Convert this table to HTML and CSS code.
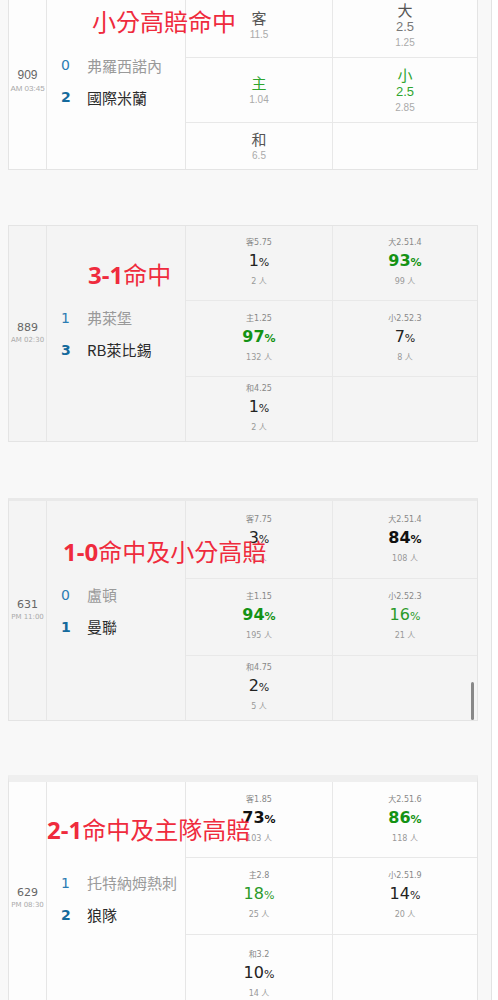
FILE: index.html
```html
<!DOCTYPE html>
<html>
<head>
    <title>賽果</title>
    <meta charset="UTF-8">
    <meta name="viewport" content="width=device-width, initial-scale=1.0">
    <link rel="stylesheet" href="styles.css">
</head>
<body>
    <div class="page">

        <div class="match m1">
            <div class="time">
                <div class="no">909</div>
                <div class="clock">AM 03:45</div>
            </div>
            <div class="teams">
                <div class="team away"><span class="score">0</span><span class="name">弗羅西諾內</span></div>
                <div class="team home"><span class="score">2</span><span class="name">國際米蘭</span></div>
            </div>
            <div class="cell pick"><div class="lbl">客</div><div class="odd">11.5</div></div>
            <div class="cell pick"><div class="lbl">大</div><div class="line">2.5</div><div class="odd">1.25</div></div>
            <div class="cell pick win"><div class="lbl">主</div><div class="odd">1.04</div></div>
            <div class="cell pick win"><div class="lbl">小</div><div class="line">2.5</div><div class="odd">2.85</div></div>
            <div class="cell pick last"><div class="lbl">和</div><div class="odd">6.5</div></div>
            <div class="cell last"></div>
            <div class="stamp">小分高賠命中</div>
        </div>

        <div class="match m2 grey">
            <div class="time">
                <div class="no">889</div>
                <div class="clock">AM 02:30</div>
            </div>
            <div class="teams">
                <div class="team away"><span class="score">1</span><span class="name">弗萊堡</span></div>
                <div class="team home"><span class="score">3</span><span class="name">RB萊比錫</span></div>
            </div>
            <div class="cell vote"><div class="tag">客5.75</div><div class="pct">1<small>%</small></div><div class="cnt">2 人</div></div>
            <div class="cell vote"><div class="tag">大2.51.4</div><div class="pct strong green">93<small>%</small></div><div class="cnt">99 人</div></div>
            <div class="cell vote"><div class="tag">主1.25</div><div class="pct strong green">97<small>%</small></div><div class="cnt">132 人</div></div>
            <div class="cell vote"><div class="tag">小2.52.3</div><div class="pct">7<small>%</small></div><div class="cnt">8 人</div></div>
            <div class="cell vote last"><div class="tag">和4.25</div><div class="pct">1<small>%</small></div><div class="cnt">2 人</div></div>
            <div class="cell last"></div>
            <div class="stamp"><b>3-1</b>命中</div>
        </div>

        <div class="match m3 grey">
            <div class="time">
                <div class="no">631</div>
                <div class="clock">PM 11:00</div>
            </div>
            <div class="teams">
                <div class="team away"><span class="score">0</span><span class="name">盧頓</span></div>
                <div class="team home"><span class="score">1</span><span class="name">曼聯</span></div>
            </div>
            <div class="cell vote"><div class="tag">客7.75</div><div class="pct">3<small>%</small></div><div class="cnt">4 人</div></div>
            <div class="cell vote"><div class="tag">大2.51.4</div><div class="pct strong">84<small>%</small></div><div class="cnt">108 人</div></div>
            <div class="cell vote"><div class="tag">主1.15</div><div class="pct strong green">94<small>%</small></div><div class="cnt">195 人</div></div>
            <div class="cell vote"><div class="tag">小2.52.3</div><div class="pct green">16<small>%</small></div><div class="cnt">21 人</div></div>
            <div class="cell vote last"><div class="tag">和4.75</div><div class="pct">2<small>%</small></div><div class="cnt">5 人</div></div>
            <div class="cell last"></div>
            <div class="stamp"><b>1-0</b>命中及小分高賠</div>
            <div class="scrollbar"></div>
        </div>

        <div class="match m4">
            <div class="time">
                <div class="no">629</div>
                <div class="clock">PM 08:30</div>
            </div>
            <div class="teams">
                <div class="team away"><span class="score">1</span><span class="name">托特納姆熱刺</span></div>
                <div class="team home"><span class="score">2</span><span class="name">狼隊</span></div>
            </div>
            <div class="cell vote"><div class="tag">客1.85</div><div class="pct strong">73<small>%</small></div><div class="cnt">103 人</div></div>
            <div class="cell vote"><div class="tag">大2.51.6</div><div class="pct strong green">86<small>%</small></div><div class="cnt">118 人</div></div>
            <div class="cell vote"><div class="tag">主2.8</div><div class="pct green">18<small>%</small></div><div class="cnt">25 人</div></div>
            <div class="cell vote"><div class="tag">小2.51.9</div><div class="pct">14<small>%</small></div><div class="cnt">20 人</div></div>
            <div class="cell vote last"><div class="tag">和3.2</div><div class="pct">10<small>%</small></div><div class="cnt">14 人</div></div>
            <div class="cell last"></div>
            <div class="stamp"><b>2-1</b>命中及主隊高賠</div>
        </div>

    </div>
</body>
</html>
```

FILE: styles.css
```css
body {
    margin: 0;
    background-color: #fff;
    font-family: "DejaVu Sans", "Noto Sans CJK TC", sans-serif;
    overflow: hidden;
}
.page {
    width: 492px;
    height: 1000px;
    box-sizing: border-box;
    padding-left: 8px;
    background-color: #f8f8f8;
    border-right: 1px solid #e3e3e3;
    overflow: hidden;
}
.match {
    position: relative;
    width: 470px;
    box-sizing: border-box;
    display: grid;
    grid-template-columns: 38px 139px 147px 1fr;
    background-color: #fdfdfd;
    border: 1px solid #e4e4e4;
}
.match.grey {
    background-color: #f4f4f4;
}
.m1 {
    margin-top: -8px;
    grid-template-rows: 65px 65px 46px;
}
.m2 {
    margin-top: 55px;
    grid-template-rows: 75px 76px 64px;
}
.m3 {
    margin-top: 56px;
    border-top: 3px solid #e9e9e9;
    grid-template-rows: 78px 77px 64px;
}
.m4 {
    margin-top: 54px;
    border-top: 7px solid #efefef;
    grid-template-rows: 76px 77px 80px;
}
.time {
    grid-row: 1 / 4;
    display: flex;
    flex-direction: column;
    align-items: center;
    justify-content: center;
    border-right: 1px solid #e6e6e6;
}
.time .no {
    font-size: 11px;
    color: #666;
    line-height: 13px;
}
.m1 .time .no {
    font-family: "Liberation Sans", sans-serif;
    font-size: 12px;
    line-height: 15px;
}
.time .clock {
    font-size: 7px;
    color: #aaa;
    line-height: 12px;
}
.m1 .time .clock {
    font-family: "Liberation Sans", sans-serif;
    font-size: 8px;
}
.teams {
    grid-row: 1 / 4;
    display: flex;
    flex-direction: column;
    justify-content: center;
    gap: 12px;
    padding-left: 14px;
    border-right: 1px solid #e6e6e6;
}
.team {
    display: flex;
    align-items: center;
    height: 20px;
}
.score {
    width: 26px;
    font-size: 14px;
    color: #2b7cb3;
}
.home .score {
    font-weight: bold;
    color: #156a9c;
}
.name {
    font-family: "Noto Sans CJK TC", sans-serif;
    font-size: 15px;
    color: #9a9a9a;
}
.home .name {
    color: #2a2a2a;
}
.cell {
    display: flex;
    flex-direction: column;
    align-items: center;
    justify-content: center;
    border-bottom: 1px solid #e8e8e8;
}
.cell:nth-of-type(odd) {
    border-right: 1px solid #e8e8e8;
}
.cell.last {
    border-bottom: none;
}
.pick .lbl {
    font-family: "Noto Sans CJK TC", sans-serif;
    font-size: 15px;
    line-height: 19px;
    color: #555;
}
.pick .line {
    font-family: "Liberation Sans", sans-serif;
    font-size: 13px;
    line-height: 16px;
    color: #777;
}
.pick .odd {
    font-family: "Liberation Sans", sans-serif;
    font-size: 10px;
    line-height: 16px;
    color: #aaa;
}
.pick.win .lbl,
.pick.win .line {
    color: #2fa52f;
}
.vote .tag {
    font-size: 8px;
    line-height: 10px;
    color: #888;
}
.vote .pct {
    font-size: 16px;
    line-height: 26px;
    color: #222;
}
.vote .pct small {
    font-size: 11px;
}
.vote .pct.strong {
    font-weight: bold;
    color: #111;
}
.vote .pct.green {
    color: #2a9a2a;
}
.vote .pct.strong.green {
    color: #149214;
}
.vote .cnt {
    font-size: 8px;
    line-height: 12px;
    color: #999;
}
.stamp {
    position: absolute;
    font-family: "Noto Sans CJK TC", sans-serif;
    font-size: 24px;
    line-height: 1;
    color: #ef2b3d;
    white-space: nowrap;
}
.stamp b {
    font-family: "Open Sans", "DejaVu Sans", sans-serif;
    font-weight: bold;
}
.m1 .stamp {
    left: 83px;
    top: 16px;
}
.m2 .stamp {
    left: 79px;
    top: 36px;
}
.m3 .stamp {
    left: 54px;
    top: 38px;
}
.m4 .stamp {
    left: 38px;
    top: 35px;
}
.scrollbar {
    position: absolute;
    right: 3px;
    bottom: 0;
    width: 3px;
    height: 38px;
    border-radius: 2px;
    background-color: #888;
}
```
